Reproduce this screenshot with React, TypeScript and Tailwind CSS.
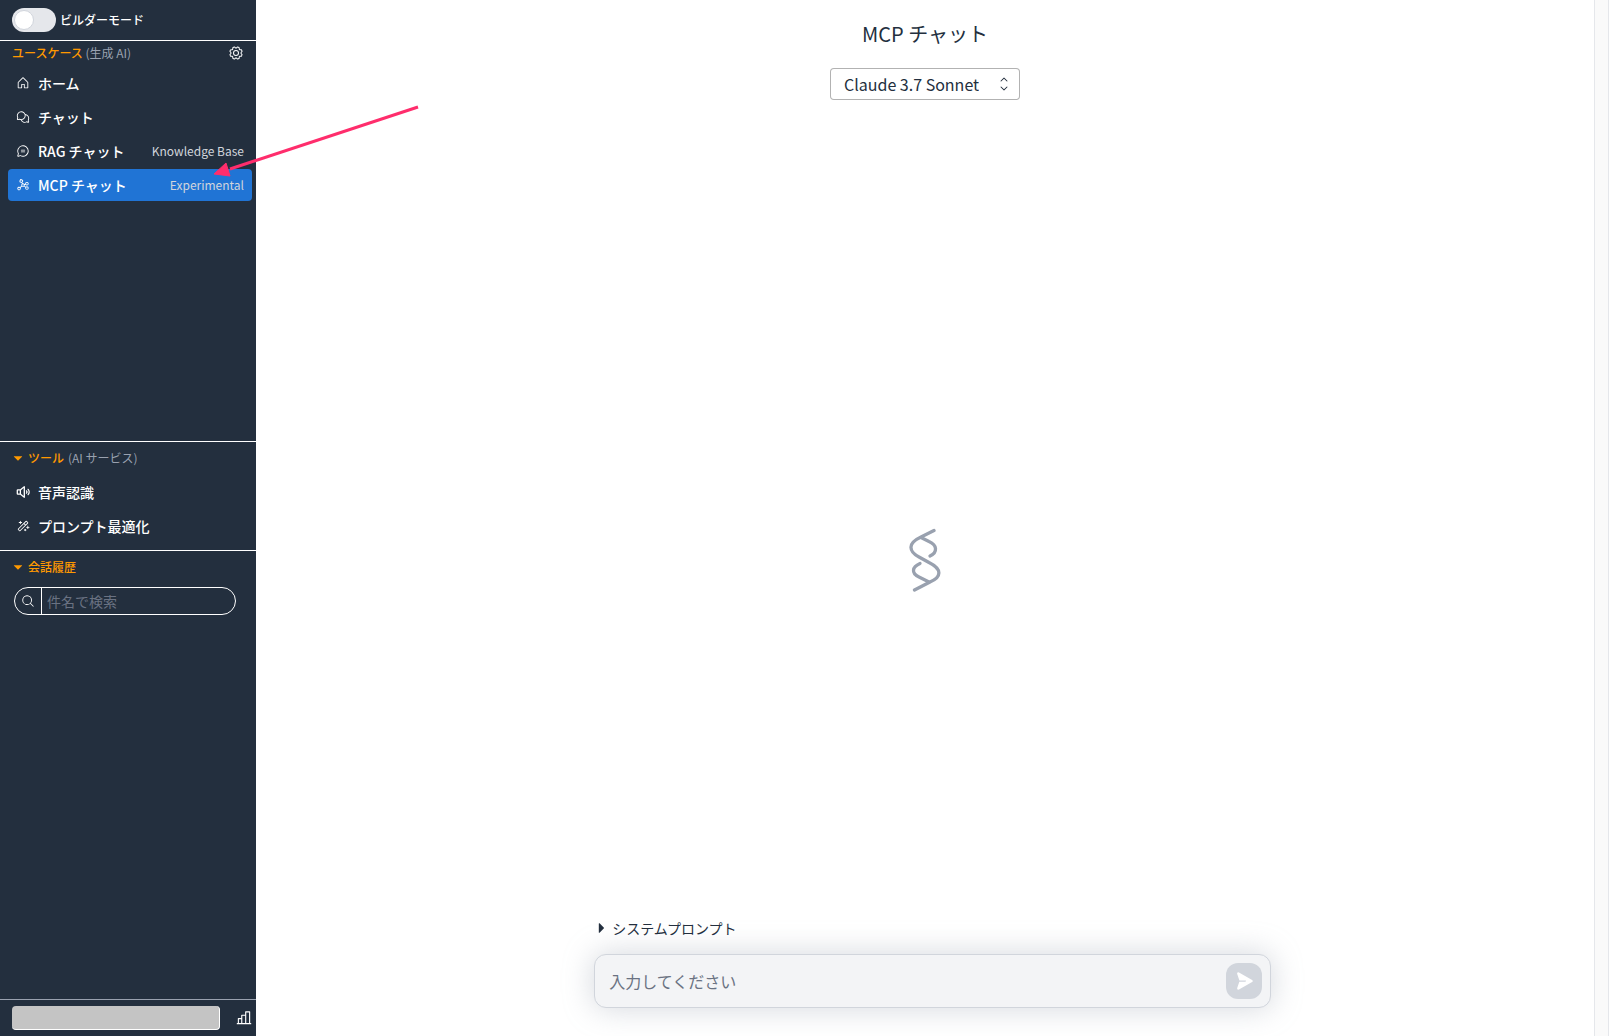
import React, { useState } from "react";
import {
  PiCaretDownFill,
  PiCaretRightFill,
  PiCaretUpDown,
  PiChartBar,
  PiChatCircleText,
  PiChatsCircle,
  PiGear,
  PiGraph,
  PiHouse,
  PiMagicWand,
  PiMagnifyingGlass,
  PiPaperPlaneRightFill,
  PiSpeakerHighBold,
} from "react-icons/pi";

type ItemProps = {
  label: string;
  icon: React.ReactNode;
  sub?: string;
  active?: boolean;
};

const useCases: ItemProps[] = [
  { label: "ホーム", icon: <PiHouse /> },
  { label: "チャット", icon: <PiChatsCircle /> },
  { label: "RAG チャット", icon: <PiChatCircleText />, sub: "Knowledge Base" },
  { label: "MCP チャット", icon: <PiGraph />, sub: "Experimental", active: true },
];

const tools: ItemProps[] = [
  { label: "音声認識", icon: <PiSpeakerHighBold /> },
  { label: "プロンプト最適化", icon: <PiMagicWand /> },
];

function DrawerItem({ label, icon, sub, active }: ItemProps) {
  return (
    <li>
      <a
        href="#"
        className={
          "flex h-8 items-center rounded px-2 " +
          (active ? "bg-[#2074d5]" : "hover:bg-[#2074d5]/60")
        }
      >
        <span className="mr-2 text-sm">{icon}</span>
        <span className="grow text-sm font-medium">{label}</span>
        {sub && <span className="text-xs text-gray-300">{sub}</span>}
      </a>
    </li>
  );
}

function SectionTitle({ title, note }: { title: string; note?: string }) {
  return (
    <h2>
      <button type="button" className="flex h-8 items-center px-3 text-xs font-medium text-[#ff9900]">
        <PiCaretDownFill className="mr-1" />
        {title}
        {note && <span className="ml-1 font-normal text-gray-400">{note}</span>}
      </button>
    </h2>
  );
}

function Drawer() {
  const [builder, setBuilder] = useState(false);

  return (
    <aside className="flex w-64 shrink-0 flex-col bg-[#232f3e] text-white">
      <div className="flex h-10 items-center px-3">
        <label className="flex cursor-pointer items-center text-xs font-medium">
          <input
            type="checkbox"
            className="peer sr-only"
            checked={builder}
            onChange={() => setBuilder(!builder)}
          />
          <span className="mr-1 flex h-6 w-11 items-center rounded-full bg-gray-200 px-0.5 peer-checked:justify-end peer-checked:bg-[#ff9900]">
            <span className="size-5 rounded-full border border-gray-300 bg-white" />
          </span>
          ビルダーモード
        </label>
      </div>

      <div className="basis-[401px] overflow-y-auto border-t border-white">
        <div className="flex h-6 items-center justify-between px-3">
          <h2 className="text-xs font-medium text-[#ff9900]">
            ユースケース <span className="font-normal text-gray-400">(生成 AI)</span>
          </h2>
          <button type="button" aria-label="設定">
            <PiGear className="size-4" />
          </button>
        </div>
        <ul className="flex flex-col gap-0.5 py-0.5 pr-1 pl-2">
          {useCases.map((item) => (
            <DrawerItem key={item.label} {...item} />
          ))}
        </ul>
      </div>

      <div className="border-t border-white pb-2">
        <SectionTitle title="ツール" note="(AI サービス)" />
        <ul className="flex flex-col gap-0.5 pt-0.5 pr-1 pl-2">
          {tools.map((item) => (
            <DrawerItem key={item.label} {...item} />
          ))}
        </ul>
      </div>

      <div className="flex-1 border-t border-white">
        <SectionTitle title="会話履歴" />
        <div className="mt-1 mr-5 ml-3.5 flex h-7 items-center overflow-hidden rounded-full border border-white">
          <PiMagnifyingGlass className="mx-1.5 size-3.5 shrink-0" />
          <input
            type="text"
            aria-label="件名で検索"
            placeholder="件名で検索"
            className="h-full w-full border-l border-white bg-transparent px-[5px] text-sm outline-none placeholder:text-gray-500"
          />
        </div>
      </div>

      <div className="flex h-[37px] items-center justify-between border-t border-gray-400 pr-[3px] pl-3">
        <div className="h-6 w-52 rounded border-r border-b border-white bg-[#c4c4c4]" />
        <button type="button" aria-label="統計">
          <PiChartBar className="size-[18px]" />
        </button>
      </div>
    </aside>
  );
}

function Logo() {
  return (
    <svg
      viewBox="0 0 32 64"
      className="h-16 w-8 fill-none stroke-gray-400 stroke-[3.3]"
      strokeLinecap="round"
      strokeLinejoin="round"
    >
      <path d="M25 2.500 12 9C-1 15 -1 23 10 29L20 34.500C33 41 33 49 21 54L5.500 62" />
      <path d="M12 9.500 20 13.500C28 17 29 24 21 28" />
      <path d="M11 35.500C3 39 2 45 10 49L20 54" />
    </svg>
  );
}

function InputChat() {
  const [content, setContent] = useState("");

  return (
    <div className="pointer-events-none absolute inset-x-0 bottom-0 flex justify-center pb-7">
      <div className="pointer-events-auto w-1/2">
        <button type="button" className="mb-4 flex h-5 items-center text-sm">
          <PiCaretRightFill className="mr-1" />
          システムプロンプト
        </button>
        <div className="flex items-center rounded-xl border border-gray-300 bg-gray-100 p-2 shadow-[0_0_30px_1px] shadow-gray-400/40">
          <textarea
            rows={1}
            aria-label="入力してください"
            placeholder="入力してください"
            value={content}
            onChange={(e) => setContent(e.target.value)}
            className="h-6 grow resize-none bg-transparent px-1.5 leading-6 outline-none placeholder:text-gray-500"
          />
          <button
            type="button"
            aria-label="送信"
            className="flex size-9 items-center justify-center rounded-xl bg-gray-300 text-xl text-white"
          >
            <PiPaperPlaneRightFill />
          </button>
        </div>
      </div>
    </div>
  );
}

export default function App() {
  return (
    <div className="relative flex h-screen font-['Noto_Sans_CJK_JP',sans-serif] text-[#232f3e]">
      <Drawer />
      <div className="relative flex grow">
        <main className="flex grow flex-col items-center">
          <h1 className="mt-5 text-xl">MCP チャット</h1>
          <div className="relative mt-5">
            <select
              aria-label="モデル"
              className="h-8 w-[190px] appearance-none rounded border border-black/30 bg-white pr-10 pl-[13px] text-base"
            >
              <option>Claude 3.7 Sonnet</option>
            </select>
            <PiCaretUpDown className="pointer-events-none absolute top-2 right-2 size-4" />
          </div>
          <div className="flex grow items-center pt-12 pb-16">
            <Logo />
          </div>
        </main>
        <div className="w-[15px] shrink-0 border-x border-gray-200 bg-[#fafafa]" />
        <InputChat />
      </div>

      {/* pointer to the new menu item */}
      <svg className="pointer-events-none absolute top-25 left-52 h-20 w-54" viewBox="0 0 216 80">
        <path d="M210 7 22 69" className="fill-none stroke-[#ff2d6c] stroke-3" />
        <path d="M6 74 18 63 22 76Z" className="fill-[#ff2d6c] stroke-[#ff2d6c]" />
      </svg>
    </div>
  );
}
